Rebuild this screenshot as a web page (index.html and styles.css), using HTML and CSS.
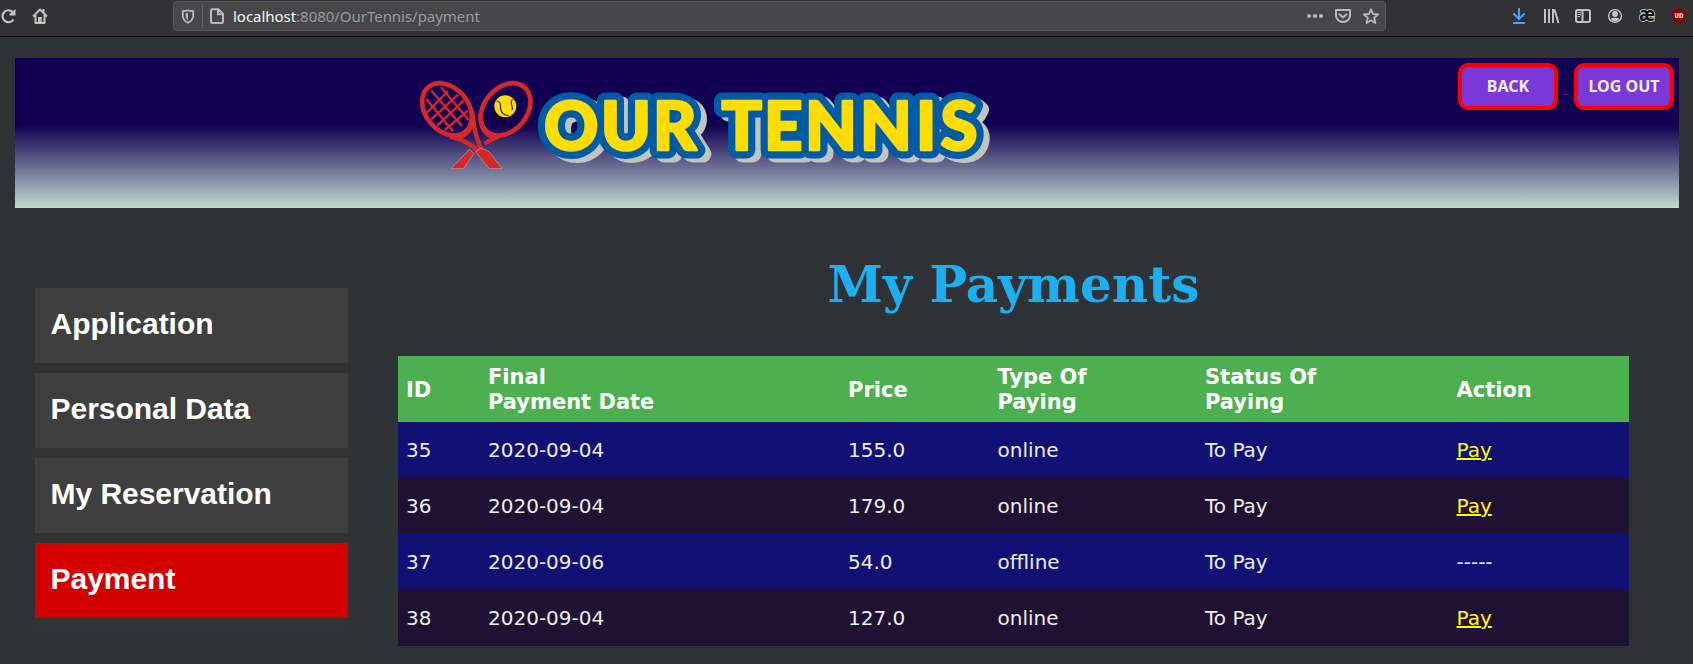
FILE: index.html
```html
<!DOCTYPE html>
<html lang="en">
<head>
<meta charset="utf-8">
<title>Our Tennis - My Payments</title>
<link rel="stylesheet" href="styles.css">
</head>
<body>
<div class="toolbar">
  <svg class="nav-icons" width="60" height="36" viewBox="0 0 60 36" fill="none" stroke="#c3c3c4" stroke-width="2">
    <path d="M13.300 12.600A6 6 0 1 0 13.600 19.500" stroke-width="2.200"/>
    <path d="M15.500 9v6.500H9.500V14l2-2 2-1.200z" fill="#c3c3c4" stroke="none"/>
    <path d="M33 16.500L40 9.500l7 7M35.500 15v8h9v-8" stroke-linejoin="round"/>
    <path d="M43.500 9v4" />
    <path d="M38 23v-6h4v6z" fill="#c3c3c4" stroke="none"/><circle cx="41" cy="20" r=".6" fill="#323234" stroke="none"/>
  </svg>
  <div class="urlbar">
    <svg class="url-icons" width="59" height="28" viewBox="174 2 59 28" fill="none" stroke="#b9b9bb" stroke-width="1.800">
      <path d="M188 10.200c-2 .9-4 .9-5.200.9v4.400c0 3.500 2 5.700 5.200 7.200 3.200-1.500 5.200-3.700 5.200-7.200v-4.400c-1.200 0-3.200 0-5.200-.9z"/>
      <path d="M188 13v7c-1.600-1-2.300-2.300-2.300-4.500V13.300z" fill="#b9b9bb" stroke="none"/>
      <path d="M202.500 5v22" stroke="#66666c" stroke-width="1"/>
      <path d="M212 9.300h6.500l4.500 4.500v8.200a1 1 0 0 1-1 1h-10a1 1 0 0 1-1-1V10.300a1 1 0 0 1 1-1zM218 9.500V14.300h5" stroke-width="2"/>
    </svg>
    <span class="url"><b>localhost</b>:8080/OurTennis/payment</span>
    <svg class="page-actions" width="80" height="28" viewBox="1305 2 80 28" fill="none" stroke="#b9b9bb" stroke-width="2">
      <g fill="#b9b9bb" stroke="none"><circle cx="1309" cy="16" r="2"/><circle cx="1315" cy="16" r="2"/><circle cx="1321" cy="16" r="2"/></g>
      <path d="M1336 10h14v5.500a7 6.500 0 0 1-14 0zM1339.500 14.200l3.500 3.300 3.500-3.300" stroke-linejoin="round" stroke-linecap="round"/>
      <path d="M1371 9.300l2 4.700 5.200.4-4 3.400 1.300 5.200-4.500-2.800-4.500 2.800 1.300-5.200-4-3.400 5.200-.4z" stroke-width="1.800" stroke-linejoin="round"/>
    </svg>
  </div>
  <svg class="tools" width="193" height="36" viewBox="1500 0 193 36" fill="none" stroke="#c3c3c4" stroke-width="2">
    <path d="M1519 8v10.500M1513.500 13.500l5.500 5.500 5.500-5.500M1513 23h12" stroke="#45a1ff"/>
    <path d="M1545 9v14M1549 9v14M1553 9v14M1554.500 9.500l4 13.500"/>
    <rect x="1576" y="10" width="14" height="12" rx="2"/><path d="M1582.500 10v12"/><path d="M1577.500 12.500h3.500M1577.500 14.500h3.500M1577.500 16.500h2.500" stroke-width="1"/>
    <circle cx="1615" cy="16" r="6.400" stroke-width="1.400"/><circle cx="1615" cy="14" r="3" fill="#c3c3c4" stroke="none"/><path d="M1610.500 19c1-1.800 8-1.800 9 0-2 3.200-7 3.200-9 0z" fill="#c3c3c4" stroke="none"/>
    <text class="ae" x="1639" y="21" textLength="16" lengthAdjust="spacingAndGlyphs">æ</text>
    <path d="M1679 8c2 1.500 4.500 2 7 2 0 7.500-.5 10.500-7 14-6.500-3.500-7-6.500-7-14 2.500 0 5-.5 7-2z" fill="#860000" stroke="none"/>
    <text class="ub" x="1674.500" y="18" textLength="9" lengthAdjust="spacingAndGlyphs">UD</text>
  </svg>
</div>

<header class="banner">
  <svg class="logo" width="580" height="100" viewBox="415 76 580 100" role="img" aria-label="Our Tennis">
    <g transform="translate(410 74) scale(.33333)" fill="none" stroke="#d62828" stroke-width="14">
      <ellipse cx="111" cy="106" rx="64" ry="87" transform="rotate(-40 111 106)"/>
      <ellipse cx="287" cy="106" rx="64" ry="87" transform="rotate(40 287 106)"/>
      <path d="M49 75l80 97M64 50l92 106M93 40l83 98M50 117l64-66M64 136l80-74M82 155l80-76M104 168l70-58" stroke-width="7"/>
      <path d="M186 110C194 170 200 205 222 240M120 188C160 195 190 215 214 240M188 135C186 165 170 182 148 190" stroke-width="13"/>
      <path d="M211 120C210 155 222 180 250 190M268 187C250 192 238 200 224 209" stroke-width="13"/>
      <path d="M196 233L213 222 237 233 276 284H238zM178 226l14 12-32 46h-37z" fill="#d62828" stroke="#b9a5bd" stroke-width="2"/>
      <circle cx="286" cy="97" r="33" fill="#ffdd00" stroke="none"/>
      <path d="M260 81c14 2 11 14 12 24 2 15 12 19 24 20M308 76c-12 10 4 22-2 32" stroke="#2a1c4d" stroke-width="3.500"/>
    </g>
    <g class="wordmark">
      <use class="outline" href="#word"/>
      <g class="face"><text id="word" class="word" y="149.800" x="544 601 653 721.500 764 805 860 916 940.500">OURTENNIS</text></g>
    </g>
  </svg>
  <nav class="session"><a class="button" href="#">BACK</a><a class="gap" href="#">&nbsp;</a><a class="button" href="#">LOG OUT</a></nav>
</header>

<div class="layout">
  <aside class="menu">
    <a href="#">Application</a>
    <a href="#">Personal Data</a>
    <a href="#">My Reservation</a>
    <a class="active" href="#">Payment</a>
  </aside>
  <main>
    <h1>My Payments</h1>
    <table>
      <colgroup><col class="c1"><col class="c2"><col class="c3"><col class="c4"><col class="c5"><col></colgroup>
      <thead><tr><th>ID</th><th>Final<br>Payment Date</th><th>Price</th><th class="fine">Type Of<br>Paying</th><th>Status Of<br>Paying</th><th class="fine">Action</th></tr></thead>
      <tbody>
        <tr><td>35</td><td>2020-09-04</td><td>155.0</td><td class="fine">online</td><td>To Pay</td><td class="fine"><a href="#">Pay</a></td></tr>
        <tr><td>36</td><td>2020-09-04</td><td>179.0</td><td class="fine">online</td><td>To Pay</td><td class="fine"><a href="#">Pay</a></td></tr>
        <tr><td>37</td><td>2020-09-06</td><td>54.0</td><td class="fine">offline</td><td>To Pay</td><td class="fine">-----</td></tr>
        <tr><td>38</td><td>2020-09-04</td><td>127.0</td><td class="fine">online</td><td>To Pay</td><td class="fine"><a href="#">Pay</a></td></tr>
      </tbody>
    </table>
  </main>
</div>
</body>
</html>
```
FILE: styles.css
```css
* { box-sizing: border-box; }
body { margin: 0; height: 664px; overflow: hidden; background: #2f3335; font-family: "DejaVu Sans", sans-serif; }
svg { display: block; flex: none; }

.toolbar { display: flex; height: 37px; background: #323234; border-bottom: 1px solid #0c0c0d; }
.urlbar { display: flex; align-items: center; width: 1213px; height: 30px; margin: 1px 114px 0 113px; border: 1px solid #5a5a5e; border-radius: 4px; background: #474749; }
.url { flex: 1; color: #9a9a9b; font: 15px/28px "Noto Sans", sans-serif; letter-spacing: -0.03px; }
.url b { color: #f9f9fa; font-weight: 400; }
.ae { font: bold 19px "Open Sans", sans-serif; fill: #111; stroke: #ddd; stroke-width: 1.5px; paint-order: stroke; }
.ub { font: bold 6.5px "DejaVu Sans", sans-serif; fill: #fff; stroke: none; }

.banner { display: flex; justify-content: space-between; height: 150px; margin: 21px 14px 0 15px; padding: 5px 5px 0 400px; background: linear-gradient(#120052 45%, #c1dbd2); }
.logo { margin-top: 13px; overflow: visible; }
.word { font: 900 67px Lato, sans-serif; stroke-linejoin: round; }
.wordmark { filter: drop-shadow(6px 4px 0 #bfc4bc); }
.outline { fill: #005ba6; stroke: #005ba6; stroke-width: 17px; }
.face { fill: #ffdd00; stroke: #ffdd00; stroke-width: 2.6px; }
.session { display: flex; }
.button { width: 100px; height: 47px; border: 4px solid #f00; border-radius: 10px; background: #7b37d8; color: #eee; font: bold 16px/38px "Noto Sans", sans-serif; text-align: center; text-decoration: none; }
.gap { width: 16px; padding: 13px 5px 0; color: #551a8b; font-size: 18px; }

.layout { display: flex; align-items: flex-start; padding-left: 35px; }
.menu { width: 313px; margin-top: 80px; padding-bottom: 0.1px; background: #333; }
.menu a { display: block; height: 75px; margin-bottom: 10px; padding-left: 15.5px; background: #3f3f3f; color: #fff; font: bold 30px/71px "Liberation Sans", Arial, sans-serif; letter-spacing: -0.03px; text-decoration: none; }
.menu .active { background: #d40000; }
main { width: 1231px; margin-left: 50px; }
h1 { height: 58px; margin: 48px 0 42px; color: #1caff2; font: bold 50px/58px "DejaVu Serif", serif; text-align: center; }
table { width: 1231px; table-layout: fixed; border-collapse: collapse; color: #eee; font-size: 20px; }
.c1 { width: 82px; } .c2 { width: 360px; } .c3 { width: 150px; } .c4 { width: 207px; } .c5 { width: 252px; }
th { height: 66px; padding: 2px 8px 0; background: #4caf50; color: #fff; font-size: 21px; line-height: 25px; text-align: left; }
td { height: 56px; padding: 0 8px; }
.fine { padding-left: 7.5px; }
tbody tr { background: #1f1233; }
tbody tr:nth-child(odd) { background: #111075; }
td a { color: #ff0; }
```
